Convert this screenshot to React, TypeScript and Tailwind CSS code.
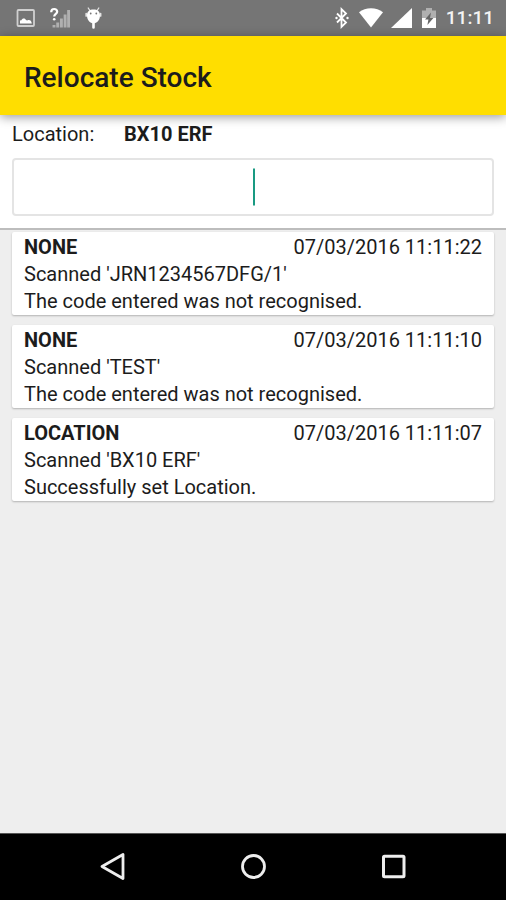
type Scan = {
  type: string;
  time: string;
  code: string;
  result: string;
};

const scans: Scan[] = [
  {
    type: "NONE",
    time: "07/03/2016 11:11:22",
    code: "JRN1234567DFG/1",
    result: "The code entered was not recognised.",
  },
  {
    type: "NONE",
    time: "07/03/2016 11:11:10",
    code: "TEST",
    result: "The code entered was not recognised.",
  },
  {
    type: "LOCATION",
    time: "07/03/2016 11:11:07",
    code: "BX10 ERF",
    result: "Successfully set Location.",
  },
];

function StatusBar() {
  return (
    <div className="flex h-9 shrink-0 items-center justify-between bg-[#757575] pr-3 pl-4 text-[#f4f4f4]">
      <div className="flex items-center gap-[14px]">
        {/* picture */}
        <svg width="20" height="20" viewBox="0 0 20 20" fill="none" aria-hidden="true">
          <rect x="1.5" y="2" width="16.500" height="16" rx="1" stroke="#d0d0d0" strokeWidth="1.8" />
          <path d="M4 15.500v-3l1.500-.3c.5-2.200 3.500-2.400 4.300-.4 1 .8 1.500.8 2.400.2 1.800-.4 3.300.6 3.600 3.500z" fill="#fff" />
        </svg>
        {/* unknown mobile signal */}
        <svg width="20" height="22" viewBox="0 0 20 22" fill="none" aria-hidden="true">
          <path d="M4 20.500v-2.500M7.700 20.500v-5M11.400 20.500V11.500M15.100 20.500V7.500M18.600 20.500V3" stroke="#b0b0b0" strokeWidth="2.900" />
          <path d="M1.200 5.200C1.200 3 2.400 2 4.200 2s3 1 3 2.700c0 2.100-3 2.300-3 4.700" stroke="#fff" strokeWidth="2.200" />
          <circle cx="4.200" cy="12.200" r="1.300" fill="#fff" />
        </svg>
        {/* usb debugging */}
        <svg width="18" height="24" viewBox="0 0 18 24" aria-hidden="true">
          <path d="M4.200 2l2 3M14.800 2l-2 3" stroke="#e4e4e4" strokeWidth="1.300" strokeLinecap="round" />
          <path d="M2.200 7.500v2.500M16.600 7.500v2.500" stroke="#e4e4e4" strokeWidth="1.700" strokeLinecap="round" />
          <path d="M9.500 3.500c-4 0-6.500 2-6.500 5.800 0 4.200 2.300 7.200 5.200 7.900v4.300a1.300 1.300 0 0 0 2.600 0v-4.300c2.900-.7 5.200-3.700 5.200-7.900 0-3.800-2.500-5.800-6.500-5.800z" fill="#fff" />
          <circle cx="6.700" cy="7.500" r=".9" fill="#757575" />
          <circle cx="12.300" cy="7.500" r=".9" fill="#757575" />
        </svg>
      </div>
      <div className="flex items-center gap-2">
        {/* bluetooth */}
        <svg width="16" height="22" viewBox="0 0 16 22" fill="none" aria-hidden="true">
          <path d="M2 6.500l9 9-4.500 4.300V2.200L11 6.500l-9 9" stroke="#fff" strokeWidth="1.800" />
          <circle cx="1.500" cy="11" r="1.200" fill="#fff" />
          <circle cx="12.500" cy="11" r="1.200" fill="#fff" />
        </svg>
        {/* wifi */}
        <svg width="24" height="20" viewBox="0 0 24 20" aria-hidden="true">
          <path d="M0 4.200C3.400 1.600 7.500.2 12 .2s8.600 1.400 12 4L12 19.500z" fill="#fff" />
        </svg>
        {/* mobile signal */}
        <svg width="21" height="20" viewBox="0 0 21 20" aria-hidden="true">
          <path d="M0 20L21 0v20z" fill="#fff" />
        </svg>
        {/* charging battery */}
        <svg width="18" height="20" viewBox="0 0 18 20" aria-hidden="true">
          <path d="M2 2.500h4V0h6v2.500h4V10H2z" fill="#b0b0b0" />
          <path d="M2 10h14v10H2z" fill="#fff" />
          <path d="M11 4.500L5 11.500h3.400L7.400 17l6-7H10z" fill="#666" />
        </svg>
        <span className="text-[19px] leading-6 font-medium">11:11</span>
      </div>
    </div>
  );
}

function ScanCard({ scan }: { scan: Scan }) {
  return (
    <li className="rounded-xs bg-white px-3 pt-[2px] shadow-[0_1px_2px_rgba(0,0,0,0.25)]">
      <div className="flex justify-between">
        <span className="font-bold">{scan.type}</span>
        <time>{scan.time}</time>
      </div>
      <p>Scanned '{scan.code}'</p>
      <p>{scan.result}</p>
    </li>
  );
}

function NavBar() {
  return (
    <nav className="flex h-[67px] shrink-0 items-center justify-center gap-28 border-t border-[#555] bg-black">
      <button type="button" aria-label="Back">
        <svg width="28" height="28" viewBox="0 0 28 28" fill="none">
          <path d="M3 13.500L24 1.500v24z" stroke="#eee" strokeWidth="2.800" strokeLinejoin="round" />
        </svg>
      </button>
      <button type="button" aria-label="Home">
        <svg width="28" height="28" viewBox="0 0 28 28" fill="none">
          <circle cx="14.500" cy="13.500" r="11" stroke="#eee" strokeWidth="2.800" />
        </svg>
      </button>
      <button type="button" aria-label="Recent apps">
        <svg width="28" height="28" viewBox="0 0 28 28" fill="none">
          <rect x="4.500" y="3.200" width="20.500" height="20.500" rx="1" stroke="#eee" strokeWidth="3" />
        </svg>
      </button>
    </nav>
  );
}

export default function App() {
  return (
    <div className="flex min-h-screen flex-col bg-[#eeeeee] font-[Roboto,sans-serif] text-xl leading-[27px] text-[#1c1c1c]">
      <StatusBar />
      <header className="relative flex h-[79px] shrink-0 items-center bg-[#ffde00] px-6 pt-1 shadow-[0_2px_10px_rgba(0,0,0,0.4)]">
        <h1 className="text-[28px] leading-8 font-medium">Relocate Stock</h1>
      </header>

      <main className="flex-1">
        <section className="border-b-2 border-[#bdbdbd] bg-white px-3 pt-[6px] pb-3">
          <div className="flex">
            <label htmlFor="scan" className="w-28">
              Location:
            </label>
            <span className="font-bold">BX10 ERF</span>
          </div>
          <div className="relative mt-[10px]">
            <input
              id="scan"
              type="text"
              className="block h-[58px] w-full rounded-sm border-2 border-[#e4e4e4] bg-white px-3 text-center caret-[#009688] outline-none"
            />
            <span className="pointer-events-none absolute top-1/2 left-1/2 h-[37px] w-[2px] -translate-y-1/2 bg-[#199a82]" />
          </div>
        </section>

        <ul className="flex flex-col gap-[10px] px-3 pt-[2px] pb-3">
          {scans.map((scan) => (
            <ScanCard key={scan.time} scan={scan} />
          ))}
        </ul>
      </main>
      <NavBar />
    </div>
  );
}
